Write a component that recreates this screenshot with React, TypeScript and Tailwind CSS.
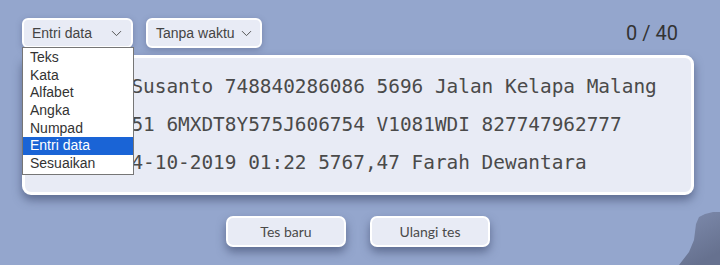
import { ChevronDown } from 'lucide-react';

const options = ['Teks', 'Kata', 'Alfabet', 'Angka', 'Numpad', 'Entri data', 'Sesuaikan'];

const lines = [
  'Bambang Susanto 748840286086 5696 Jalan Kelapa Malang',
  '3412092051 6MXDT8Y575J606754 V1081WDI 827747962777',
  'Kamis, 14-10-2019 01:22 5767,47 Farah Dewantara',
];

function SelectBox({ label, width, chevronGap }: { label: string; width: string; chevronGap: string }) {
  return (
    <div
      className={`flex h-[30px] ${width} items-center rounded-[6px] border-2 border-white bg-[#e8ebf5] pl-[8px] text-[14px] text-[#444] shadow-[0_2px_6px_rgba(60,70,110,0.35)] font-['Liberation_Sans',Arial,sans-serif]`}
    >
      <span>{label}</span>
      <ChevronDown className={`${chevronGap} h-[17px] w-[17px] text-[#555]`} strokeWidth={1.4} />
    </div>
  );
}

export default function App() {
  return (
    <main className="relative h-[265px] w-[720px] overflow-hidden bg-[#94a6cd]">
      {/* rock in the background photo */}
      <svg className="absolute bottom-0 right-0" width="45" height="55" viewBox="0 0 45 55">
        <defs>
          <linearGradient id="rock" x1="0" y1="0" x2="0.4" y2="1">
            <stop offset="0" stopColor="#7f8cae" />
            <stop offset="1" stopColor="#66718f" />
          </linearGradient>
        </defs>
        <path d="M4 55 L14 42 L19 30 L21 14 L24 7 L30 4 L38 2 L45 2 L45 55 Z" fill="url(#rock)" />
      </svg>

      <div className="relative flex flex-col pl-[22px] pr-[26px] pt-[18px]">
        <div className="flex items-center">
          <SelectBox label="Entri data" width="w-[111px]" chevronGap="ml-auto mr-[6px]" />
          <div className="ml-[13px]">
            <SelectBox label="Tanpa waktu" width="w-[116px]" chevronGap="ml-[3px]" />
          </div>
          <span className="ml-auto mr-[16px] text-[20px] text-[#333] font-['Roboto',sans-serif]">0 / 40</span>
        </div>

        <div className="mt-[7px] h-[140px] rounded-[9px] border-[3px] border-white bg-[#e8ebf5] pl-[13px] pt-[10px] shadow-[0_5px_10px_rgba(50,60,95,0.55)]">
          {lines.map((line) => (
            <div
              key={line}
              className="h-[38px] whitespace-pre text-[19.4px] leading-[38px] text-[#4a4a4a] font-['DejaVu_Sans_Mono','Liberation_Mono',monospace]"
            >
              {line}
            </div>
          ))}
        </div>

        <div className="mt-[21px] flex justify-center gap-[24px] font-['Lato',sans-serif] text-[14px] text-[#4a4a4a]">
          <button className="h-[31px] w-[120px] rounded-[7px] border-2 border-white bg-[#e8ebf5] shadow-[0_5px_10px_rgba(50,60,95,0.55)]">
            Tes baru
          </button>
          <button className="h-[31px] w-[120px] rounded-[7px] border-2 border-white bg-[#e8ebf5] shadow-[0_5px_10px_rgba(50,60,95,0.55)]">
            Ulangi tes
          </button>
        </div>
      </div>

      <ul className="absolute left-[22px] top-[47px] w-[112px] border border-[#767676] bg-white py-[1px] text-[14px] text-[#333] font-['Liberation_Sans',Arial,sans-serif]">
        {options.map((o) => (
          <li
            key={o}
            className={`h-[17.7px] pl-[7px] leading-[17.7px] ${o === 'Entri data' ? 'bg-[#1a64d6] text-white' : ''}`}
          >
            {o}
          </li>
        ))}
      </ul>
    </main>
  );
}
